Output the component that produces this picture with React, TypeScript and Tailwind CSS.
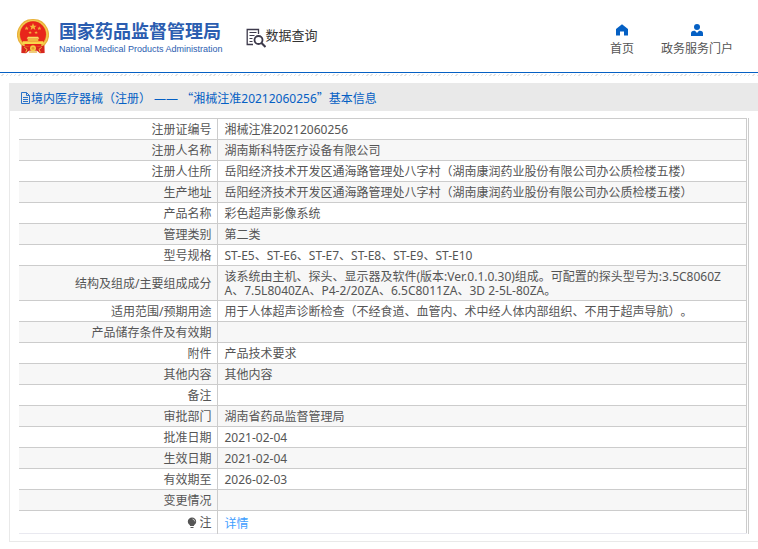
type Row = {
    label: string;
    value: string;
};

const ROWS: Row[] = [
    { label: "注册证编号", value: "湘械注准20212060256" },
    { label: "注册人名称", value: "湖南斯科特医疗设备有限公司" },
    { label: "注册人住所", value: "岳阳经济技术开发区通海路管理处八字村（湖南康润药业股份有限公司办公质检楼五楼）" },
    { label: "生产地址", value: "岳阳经济技术开发区通海路管理处八字村（湖南康润药业股份有限公司办公质检楼五楼）" },
    { label: "产品名称", value: "彩色超声影像系统" },
    { label: "管理类别", value: "第二类" },
    { label: "型号规格", value: "ST-E5、ST-E6、ST-E7、ST-E8、ST-E9、ST-E10" },
    {
        label: "结构及组成/主要组成成分",
        value: "该系统由主机、探头、显示器及软件(版本:Ver.0.1.0.30)组成。可配置的探头型号为:3.5C8060ZA、7.5L8040ZA、P4-2/20ZA、6.5C8011ZA、3D 2-5L-80ZA。",
    },
    { label: "适用范围/预期用途", value: "用于人体超声诊断检查（不经食道、血管内、术中经人体内部组织、不用于超声导航）。" },
    { label: "产品储存条件及有效期", value: "" },
    { label: "附件", value: "产品技术要求" },
    { label: "其他内容", value: "其他内容" },
    { label: "备注", value: "" },
    { label: "审批部门", value: "湖南省药品监督管理局" },
    { label: "批准日期", value: "2021-02-04" },
    { label: "生效日期", value: "2021-02-04" },
    { label: "有效期至", value: "2026-02-03" },
    { label: "变更情况", value: "" },
];

function Emblem() {
    return (
        <svg viewBox="0 0 96 105" className="h-[35px] w-8 shrink-0" aria-hidden="true">
            <path d="M14 72L13 102l14 1 9-8h24l9 8 14-1-1-30z" fill="#d7261e" />
            <path d="M48 0a47 47 0 0 1 36 78l-10 7H22l-10-7A47 47 0 0 1 48 0z" fill="#e9b23c" />
            <circle cx="48" cy="47" r="43" fill="none" stroke="#f6cf55" strokeWidth="3" />
            <circle cx="48" cy="46" r="39" fill="#e8251b" />
            <path d="M48 12l3 8h8l-6 5 2 8-7-5-7 5 2-8-6-5h8z" fill="#f5b93a" />
            <g fill="#f3a93b">
                <path d="M29 22l2 4h4l-3 3 1 4-4-2-4 2 1-4-3-3h4z" />
                <path d="M67 22l2 4h4l-3 3 1 4-4-2-4 2 1-4-3-3h4z" />
                <path d="M39 36l2 3h3l-2 3 1 3-4-2-3 2 1-3-3-3h4z" />
                <path d="M57 36l2 3h3l-2 3 1 3-4-2-3 2 1-3-3-3h4z" />
            </g>
            <path d="M33 53h30l4 6H29z" fill="#f9dc62" />
            <path d="M32 60h32v6H32z" fill="#f0b83e" />
            <path d="M18 67h60l2 8H16z" fill="#f9d64a" />
            <path d="M23 77h50v6H23z" fill="#e8251b" />
            <path d="M15 79q15 8 25 4l8-5 8 5q10 4 25-4l-5 12q-16 5-28 0-12 5-28 0z" fill="#d7261e" />
            <circle cx="48" cy="88" r="9" fill="#f5c945" />
            <circle cx="48" cy="88" r="4" fill="#e59a2e" />
            <path d="M22 85l8 6-4 9M74 85l-8 6 4 9" fill="none" stroke="#f0bd3e" strokeWidth="3" />
            <path d="M36 99h24" fill="none" stroke="#e9b23c" strokeWidth="4" />
        </svg>
    );
}

function SearchDocIcon() {
    return (
        <svg viewBox="0 0 20 20" className="mt-1 size-5 shrink-0" fill="none" stroke="#3d3a4b" aria-hidden="true">
            <path d="M7 16.5H1.2v-15h11.3V6" strokeWidth="1.3" />
            <path d="M3.5 4.5h7M3.5 7.5h5M3.5 10.5h3M3.5 13.5h3" strokeWidth="1" />
            <circle cx="12.5" cy="12" r="4" strokeWidth="1.8" />
            <path d="M15.5 15l4 4" strokeWidth="2.2" />
        </svg>
    );
}

function HomeIcon() {
    return (
        <svg viewBox="0 0 12 12" className="size-3" aria-hidden="true">
            <path d="M6 0.3L0 5v6.5h4V7.5h4v4h4V5z" fill="#0560c4" />
        </svg>
    );
}

function UserIcon() {
    return (
        <svg viewBox="0 0 12 12" className="size-3" fill="#0560c4" aria-hidden="true">
            <circle cx="6" cy="3" r="3" />
            <path d="M0 12V9.5Q0 7 3 6.8h1L6 9l2-2.2h1q3 .2 3 2.7V12z" />
        </svg>
    );
}

function DocIcon() {
    return (
        <svg viewBox="0 0 11 12" className="h-3 w-[11px] shrink-0" fill="none" stroke="#2a73c9" aria-hidden="true">
            <path d="M1.5.5h5l3 3v8h-8zM6.5.5v3h3M3 5.5h5M3 7.5h5M3 9.5h5" />
        </svg>
    );
}

function BulbIcon() {
    return (
        <svg viewBox="0 0 10 12" className="h-3 w-2.5" aria-hidden="true">
            <path d="M5 .5a4.2 4.2 0 0 0-4.2 4.2C.8 7 3 7.5 3.2 9h3.6C7 7.5 9.2 7 9.2 4.7A4.2 4.2 0 0 0 5 .5z" fill="#555" />
            <path d="M3.5 10h3v1h-3z" fill="#555" />
            <path d="M5.5 2q2 .4 2.3 2.4" fill="none" stroke="#ddd" strokeWidth=".8" />
        </svg>
    );
}

export default function App() {
    return (
        <div className="bg-white pb-2 font-['Noto_Sans','Noto_Sans_CJK_SC',sans-serif] text-xs text-[#555] [text-spacing-trim:space-all]">
            <header className="flex h-[73px] items-center border-b border-[#0560c4] pr-[25px] pl-[17px]">
                <a href="#" className="flex items-center gap-2.5 text-[#2b5db0]">
                    <Emblem />
                    <span className="flex flex-col pt-px">
                        <span className="text-lg leading-6 font-bold">国家药品监督管理局</span>
                        <span className="font-['Liberation_Sans',sans-serif] text-[9px] leading-3">National Medical Products Administration</span>
                    </span>
                </a>
                <div className="ml-[23px] flex items-center text-[13px] text-[#333]">
                    <SearchDocIcon />
                    <span>数据查询</span>
                </div>
                <nav className="ml-auto flex gap-[27px] pt-2">
                    <a href="#" className="flex flex-col items-center gap-[5px]">
                        <HomeIcon />
                        <span>首页</span>
                    </a>
                    <a href="#" className="flex flex-col items-center gap-[5px]">
                        <UserIcon />
                        <span>政务服务门户</span>
                    </a>
                </nav>
            </header>
            <div className="mt-px h-0.5 bg-[repeating-linear-gradient(135deg,#fff_0px,#fff_2px,#e2e2e2_2px,#e2e2e2_3px)]" />
            <main className="mt-[7px] ml-[9px] border-b border-l border-[#e9e9e9] pb-[7px]">
                <h1 className="flex h-7 items-center bg-[#e9e9e9] pt-0.5 pl-2.5 text-[#0560c4]">
                    <DocIcon />
                    <span>
                        境内医疗器械（注册） —— <span className="font-['Noto_Sans_CJK_SC',sans-serif]">“</span>
                        湘械注准20212060256
                        <span className="font-['Noto_Sans_CJK_SC',sans-serif]">”</span>基本信息
                    </span>
                </h1>
                <div className="mt-[7px] mr-[9px] ml-[9px] border-r border-[#ccc] pr-px">
                    <table className="w-full table-fixed border-collapse border-t border-r border-[#ccc]">
                        <colgroup>
                            <col className="w-[198px]" />
                            <col />
                        </colgroup>
                        <tbody>
                            {ROWS.map((row) => (
                                <tr key={row.label} className="border-b border-[#ccc] even:bg-[#f7f7f7]">
                                    <th scope="row" className="h-[21px] border-r border-[#ccc] pt-1 pr-[5px] pb-0.5 text-right leading-[14px] font-normal">
                                        {row.label}
                                    </th>
                                    <td className="pt-1 pr-3.5 pb-0.5 pl-[7px] leading-[14px] break-all">{row.value}</td>
                                </tr>
                            ))}
                            <tr className="border-b border-[#e9e9f0]">
                                <th scope="row" className="h-[23px] border-r border-[#ccc] pt-0.5 pr-[5px] font-normal">
                                    <span className="flex items-center justify-end gap-0.5 leading-[14px]">
                                        <BulbIcon />
                                        注
                                    </span>
                                </th>
                                <td className="pt-1 pl-[7px] leading-[14px]">
                                    <a href="#" className="text-[#409eff]">详情</a>
                                </td>
                            </tr>
                        </tbody>
                    </table>
                </div>
            </main>
        </div>
    );
}
